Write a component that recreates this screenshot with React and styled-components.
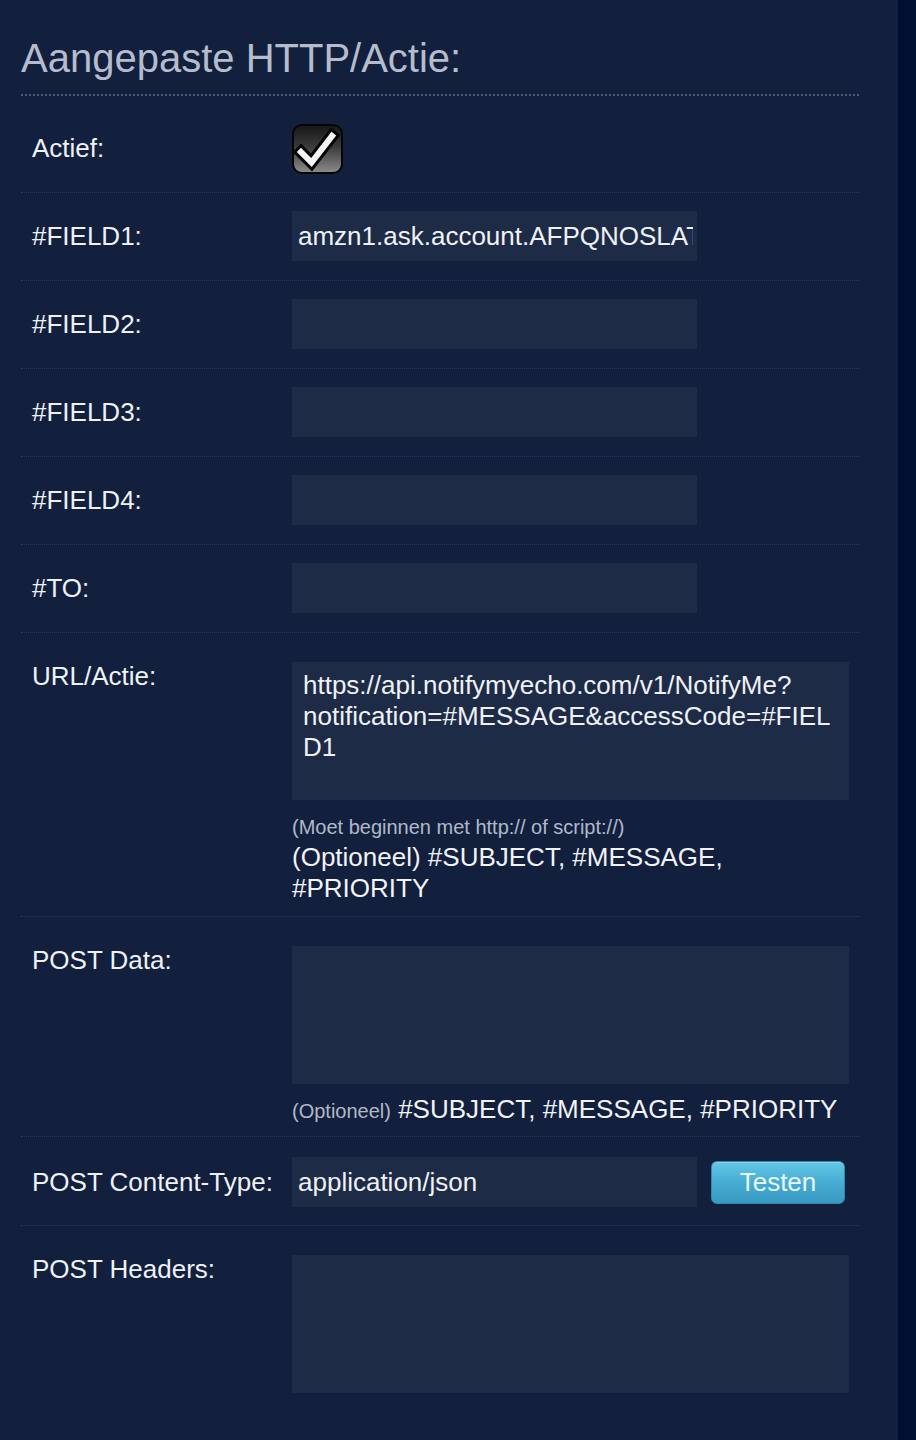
import React from 'react'
import styled, { createGlobalStyle } from 'styled-components'

const GlobalStyle = createGlobalStyle`
  html, body {
    margin: 0;
    padding: 0;
    background: #001033;
  }
  body {
    font-family: "Liberation Sans", Arial, Helvetica, sans-serif;
  }
`

const Page = styled.div`
  display: flex;
  min-height: 1440px;
`

const Panel = styled.div`
  width: 898px;
  min-height: 1440px;
  box-sizing: border-box;
  background: #121f3d;
  padding: 35px 39px 0 21px;
`

const Title = styled.h2`
  margin: 0 0 9px;
  padding-bottom: 13px;
  font-size: 40px;
  line-height: 46px;
  font-weight: normal;
  color: #b5bdcc;
  border-bottom: 2px dotted #4f5a73;
`

const Row = styled.div`
  display: grid;
  grid-template-columns: 271px 1fr;
  align-items: ${p => (p.$top ? 'start' : 'center')};
  padding: ${p => p.$pad || (p.$top ? '28px 0 12px' : '18px 0 19px')};
  border-top: ${p => (p.$first ? 'none' : '1px dotted #2b3856')};
`

const Label = styled.div`
  padding-left: 11px;
  font-size: 26px;
  line-height: 31px;
  color: #eef1f6;
  white-space: nowrap;
`

const Field = styled.div`
  display: flex;
  flex-direction: column;
  align-items: flex-start;
`

const Inline = styled.div`
  display: flex;
  align-items: center;
`

const TextInput = styled.input`
  width: 405px;
  height: 50px;
  box-sizing: border-box;
  border: none;
  outline: none;
  background: #1e2b46;
  color: #eef1f6;
  font-family: inherit;
  font-size: 26px;
  padding: 0 4px 0 6px;
`

const TextArea = styled.textarea`
  display: block;
  width: 557px;
  height: 138px;
  box-sizing: border-box;
  border: none;
  outline: none;
  resize: none;
  overflow: hidden;
  background: #1e2b46;
  color: #eef1f6;
  font-family: inherit;
  font-size: 26px;
  line-height: 31px;
  padding: 8px 4px 0 11px;
  margin-top: 1px;
`

const Note = styled.span`
  font-size: 20px;
  line-height: 26px;
  color: #b1b9c9;
`

const NoteLine = styled.div`
  margin-top: 14px;
  font-size: 20px;
  line-height: 26px;
  color: #b1b9c9;
`

const Hint = styled.div`
  margin-top: ${p => p.$gap || 2}px;
  width: 470px;
  font-size: 26px;
  line-height: 31px;
  color: #f1f3f7;
  white-space: ${p => (p.$nowrap ? 'nowrap' : 'normal')};
`

const TestButton = styled.button`
  margin-left: 14px;
  width: 134px;
  height: 43px;
  border: 1px solid #3189b0;
  border-radius: 6px;
  background: linear-gradient(180deg, #63c7e6 0%, #45aad0 55%, #3999c2 100%);
  box-shadow: inset 0 1px 0 rgba(255, 255, 255, 0.25);
  color: #eaf7fc;
  font-family: inherit;
  font-size: 26px;
  padding: 0;
  cursor: pointer;
`

const CheckWrap = styled.div`
  width: 51px;
  height: 50px;
  margin: 1px 0 -1px;
`

function CheckBox() {
  return (
    <CheckWrap>
      <svg width="51" height="50" viewBox="0 0 51 50">
        <defs>
          <linearGradient id="cbg" x1="0" y1="0" x2="0" y2="1">
            <stop offset="0" stopColor="#161616" />
            <stop offset="0.45" stopColor="#3a3a3a" />
            <stop offset="1" stopColor="#8c8c8c" />
          </linearGradient>
        </defs>
        <rect x="1" y="1" width="49" height="48" rx="9" fill="url(#cbg)" stroke="#050505" strokeWidth="2" />
        <polyline points="9,28 19.5,38.5 40,12" fill="none" stroke="#050505" strokeWidth="12" strokeLinejoin="miter" strokeLinecap="square" />
        <polyline points="9,28 19.5,38.5 40,12" fill="none" stroke="#f4f4f4" strokeWidth="6" strokeLinejoin="miter" strokeLinecap="square" />
      </svg>
    </CheckWrap>
  )
}

const fields = ['#FIELD1:', '#FIELD2:', '#FIELD3:', '#FIELD4:', '#TO:']

export default function App() {
  return (
    <>
      <GlobalStyle />
      <Page>
        <Panel>
          <Title>Aangepaste HTTP/Actie:</Title>

          <Row $first>
            <Label>Actief:</Label>
            <Field>
              <CheckBox />
            </Field>
          </Row>

          {fields.map((f, i) => (
            <Row key={f}>
              <Label>{f}</Label>
              <Field>
                <TextInput
                  readOnly
                  value={i === 0 ? 'amzn1.ask.account.AFPQNOSLATUHWZ6XGRJ3KQ7' : ''}
                />
              </Field>
            </Row>
          ))}

          <Row $top>
            <Label>URL/Actie:</Label>
            <Field>
              <TextArea
                readOnly
                value={'https://api.notifymyecho.com/v1/NotifyMe?\nnotification=#MESSAGE&accessCode=#FIEL\nD1'}
              />
              <NoteLine>(Moet beginnen met http:// of script://)</NoteLine>
              <Hint>(Optioneel) #SUBJECT, #MESSAGE, #PRIORITY</Hint>
            </Field>
          </Row>

          <Row $top $pad="28px 0 11px">
            <Label>POST Data:</Label>
            <Field>
              <TextArea readOnly value="" />
              <Hint $gap={10} $nowrap>
                <Note>(Optioneel)</Note> #SUBJECT, #MESSAGE, #PRIORITY
              </Hint>
            </Field>
          </Row>

          <Row $pad="20px 0 18px">
            <Label>POST Content-Type:</Label>
            <Inline>
              <TextInput readOnly value="application/json" />
              <TestButton type="button">Testen</TestButton>
            </Inline>
          </Row>

          <Row $top>
            <Label>POST Headers:</Label>
            <Field>
              <TextArea readOnly value="" />
            </Field>
          </Row>
        </Panel>
      </Page>
    </>
  )
}
